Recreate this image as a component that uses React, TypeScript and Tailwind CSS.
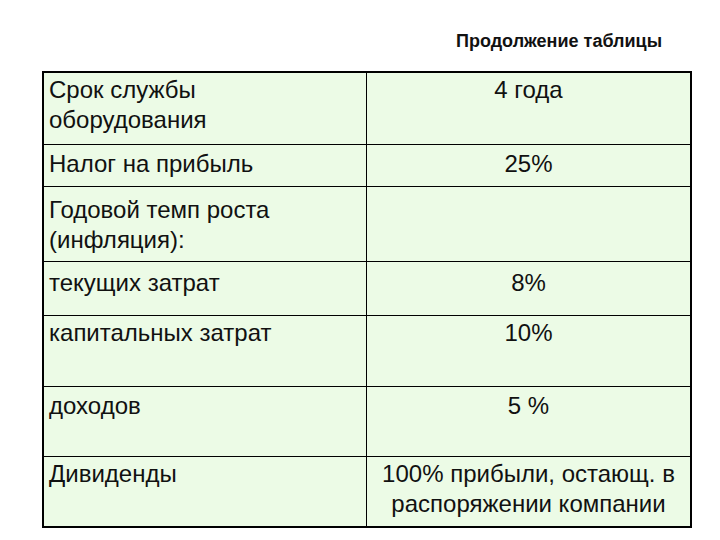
const rows = [
  { left: ['Срок службы', 'оборудования'], right: ['4 года'], h: 'h-[71px]', pt: 'pt-[2px]', first: true },
  { left: ['Налог на прибыль'], right: ['25%'], h: 'h-[42px]', pt: 'pt-[4px]' },
  { left: ['Годовой темп роста', '(инфляция):'], right: [], h: 'h-[75px]', pt: 'pt-[8px]' },
  { left: ['текущих затрат'], right: ['8%'], h: 'h-[54px]', pt: 'pt-[6px]' },
  { left: ['капитальных затрат'], right: ['10%'], h: 'h-[71px]', pt: 'pt-[2px]' },
  { left: ['доходов'], right: ['5 %'], h: 'h-[70px]', pt: 'pt-[4px]' },
  { left: ['Дивиденды'], right: ['100% прибыли, остающ. в', 'распоряжении компании'], h: 'h-[70px]', pt: 'pt-[2px]' },
]

export default function App() {
  return (
    <div className="w-[720px] h-[540px] bg-white text-[#111] font-['Liberation_Sans',Arial,sans-serif]">
      <div className="flex justify-end pt-[31px] pr-[58px] h-[71px]">
        <p className="text-[18px] leading-[20px] font-bold">Продолжение таблицы</p>
      </div>

      <div className="ml-[42px] w-[650px] border-2 border-black bg-[#ecfbe6]">
        {rows.map((r, i) => (
          <div key={i} className={`flex ${r.h} ${r.first ? '' : 'border-t border-black'}`}>
            <div className={`w-[322px] pl-[5px] ${r.pt} text-[24px] leading-[30px]`}>
              {r.left.map((t) => <p key={t}>{t}</p>)}
            </div>
            <div className={`flex-1 border-l border-black ${r.pt} text-[24px] leading-[30px] text-center`}>
              {r.right.map((t) => <p key={t}>{t}</p>)}
            </div>
          </div>
        ))}
      </div>
    </div>
  )
}
